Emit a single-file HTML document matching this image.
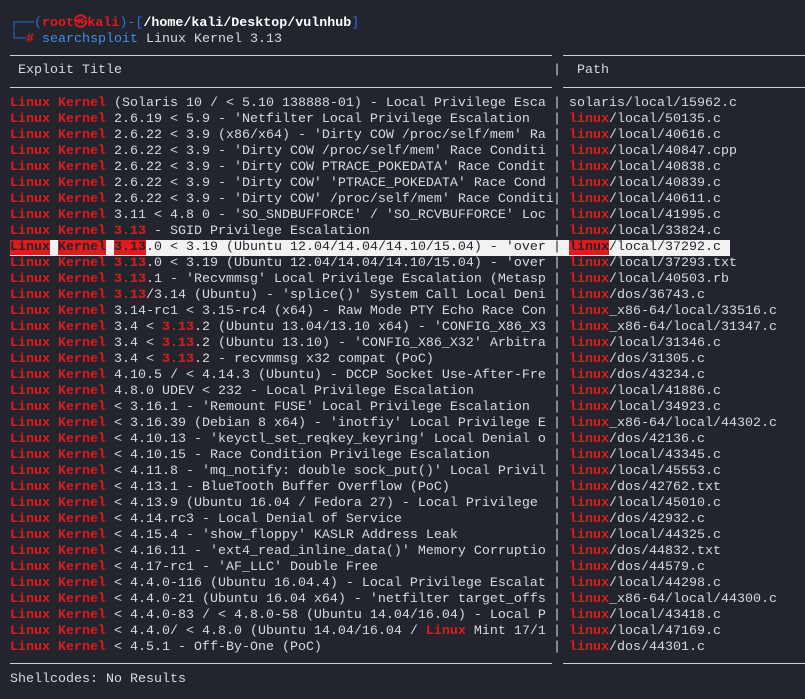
<!DOCTYPE html>
<html><head><meta charset="utf-8"><style>
body{margin:0;width:805px;height:699px;background:#23252e;overflow:hidden;font-family:"Liberation Mono","DejaVu Sans Mono",monospace;font-size:13.33px;color:#d9d9d9}
.l{position:absolute;left:10px;white-space:pre;line-height:16px}
.b{color:#2f6fe0}.r{color:#e01b1b;font-weight:bold}.w{color:#fff;font-weight:bold}.c{color:#3f8ee8}
.hr{position:absolute;height:1px;background:#d0d0d0}
#rows{position:absolute;left:10px;top:96px;line-height:16px}
#rows div,.hd{white-space:pre;height:16px}
.L{display:inline-block;width:543px;overflow:hidden;vertical-align:top}
.k{color:#e01b1b;font-weight:bold}
.hl{background:#f2f2f2;color:#23252e;width:720px}
.hl .k{background:#e01b1b;color:#23252e}
</style></head><body>
<div class="l" style="top:16px"><span class="b">┌──(</span><span class="r">root㉿kali</span><span class="b">)-[</span><span class="w">/home/kali/Desktop/vulnhub</span><span class="b">]</span></div>
<div class="l" style="top:32px"><span class="b">└─</span><span class="r">#</span> <span class="c">searchsploit</span> Linux Kernel 3.13</div>
<div class="hr" style="top:55px;left:10px;width:542px"></div><div class="hr" style="top:55px;left:563px;width:242px"></div>
<div class="l hd" style="top:63px"><span class="L"> Exploit Title</span>|  Path</div>
<div class="hr" style="top:87px;left:10px;width:542px"></div><div class="hr" style="top:87px;left:563px;width:242px"></div>
<div id="rows">
<div><span class="L"><span class="k">Linux Kernel</span> (Solaris 10 / &lt; 5.10 138888-01) - Local Privilege Esca</span>| solaris/local/15962.c</div>
<div><span class="L"><span class="k">Linux Kernel</span> 2.6.19 &lt; 5.9 - 'Netfilter Local Privilege Escalation</span>| <span class="k">linux</span>/local/50135.c</div>
<div><span class="L"><span class="k">Linux Kernel</span> 2.6.22 &lt; 3.9 (x86/x64) - 'Dirty COW /proc/self/mem' Ra</span>| <span class="k">linux</span>/local/40616.c</div>
<div><span class="L"><span class="k">Linux Kernel</span> 2.6.22 &lt; 3.9 - 'Dirty COW /proc/self/mem' Race Conditi</span>| <span class="k">linux</span>/local/40847.cpp</div>
<div><span class="L"><span class="k">Linux Kernel</span> 2.6.22 &lt; 3.9 - 'Dirty COW PTRACE_POKEDATA' Race Condit</span>| <span class="k">linux</span>/local/40838.c</div>
<div><span class="L"><span class="k">Linux Kernel</span> 2.6.22 &lt; 3.9 - 'Dirty COW' 'PTRACE_POKEDATA' Race Cond</span>| <span class="k">linux</span>/local/40839.c</div>
<div><span class="L"><span class="k">Linux Kernel</span> 2.6.22 &lt; 3.9 - 'Dirty COW' /proc/self/mem' Race Conditi</span>| <span class="k">linux</span>/local/40611.c</div>
<div><span class="L"><span class="k">Linux Kernel</span> 3.11 &lt; 4.8 0 - 'SO_SNDBUFFORCE' / 'SO_RCVBUFFORCE' Loc</span>| <span class="k">linux</span>/local/41995.c</div>
<div><span class="L"><span class="k">Linux Kernel</span> <span class="k">3.13</span> - SGID Privilege Escalation</span>| <span class="k">linux</span>/local/33824.c</div>
<div class="hl"><span class="L"><span class="k">Linux</span> <span class="k">Kernel</span> <span class="k">3.13</span>.0 &lt; 3.19 (Ubuntu 12.04/14.04/14.10/15.04) - 'over</span>| <span class="k">linux</span>/local/37292.c</div>
<div><span class="L"><span class="k">Linux Kernel</span> <span class="k">3.13</span>.0 &lt; 3.19 (Ubuntu 12.04/14.04/14.10/15.04) - 'over</span>| <span class="k">linux</span>/local/37293.txt</div>
<div><span class="L"><span class="k">Linux Kernel</span> <span class="k">3.13</span>.1 - 'Recvmmsg' Local Privilege Escalation (Metasp</span>| <span class="k">linux</span>/local/40503.rb</div>
<div><span class="L"><span class="k">Linux Kernel</span> <span class="k">3.13</span>/3.14 (Ubuntu) - 'splice()' System Call Local Deni</span>| <span class="k">linux</span>/dos/36743.c</div>
<div><span class="L"><span class="k">Linux Kernel</span> 3.14-rc1 &lt; 3.15-rc4 (x64) - Raw Mode PTY Echo Race Con</span>| <span class="k">linux</span>_x86-64/local/33516.c</div>
<div><span class="L"><span class="k">Linux Kernel</span> 3.4 &lt; <span class="k">3.13</span>.2 (Ubuntu 13.04/13.10 x64) - 'CONFIG_X86_X3</span>| <span class="k">linux</span>_x86-64/local/31347.c</div>
<div><span class="L"><span class="k">Linux Kernel</span> 3.4 &lt; <span class="k">3.13</span>.2 (Ubuntu 13.10) - 'CONFIG_X86_X32' Arbitra</span>| <span class="k">linux</span>/local/31346.c</div>
<div><span class="L"><span class="k">Linux Kernel</span> 3.4 &lt; <span class="k">3.13</span>.2 - recvmmsg x32 compat (PoC)</span>| <span class="k">linux</span>/dos/31305.c</div>
<div><span class="L"><span class="k">Linux Kernel</span> 4.10.5 / &lt; 4.14.3 (Ubuntu) - DCCP Socket Use-After-Fre</span>| <span class="k">linux</span>/dos/43234.c</div>
<div><span class="L"><span class="k">Linux Kernel</span> 4.8.0 UDEV &lt; 232 - Local Privilege Escalation</span>| <span class="k">linux</span>/local/41886.c</div>
<div><span class="L"><span class="k">Linux Kernel</span> &lt; 3.16.1 - 'Remount FUSE' Local Privilege Escalation</span>| <span class="k">linux</span>/local/34923.c</div>
<div><span class="L"><span class="k">Linux Kernel</span> &lt; 3.16.39 (Debian 8 x64) - 'inotfiy' Local Privilege E</span>| <span class="k">linux</span>_x86-64/local/44302.c</div>
<div><span class="L"><span class="k">Linux Kernel</span> &lt; 4.10.13 - 'keyctl_set_reqkey_keyring' Local Denial o</span>| <span class="k">linux</span>/dos/42136.c</div>
<div><span class="L"><span class="k">Linux Kernel</span> &lt; 4.10.15 - Race Condition Privilege Escalation</span>| <span class="k">linux</span>/local/43345.c</div>
<div><span class="L"><span class="k">Linux Kernel</span> &lt; 4.11.8 - 'mq_notify: double sock_put()' Local Privil</span>| <span class="k">linux</span>/local/45553.c</div>
<div><span class="L"><span class="k">Linux Kernel</span> &lt; 4.13.1 - BlueTooth Buffer Overflow (PoC)</span>| <span class="k">linux</span>/dos/42762.txt</div>
<div><span class="L"><span class="k">Linux Kernel</span> &lt; 4.13.9 (Ubuntu 16.04 / Fedora 27) - Local Privilege</span>| <span class="k">linux</span>/local/45010.c</div>
<div><span class="L"><span class="k">Linux Kernel</span> &lt; 4.14.rc3 - Local Denial of Service</span>| <span class="k">linux</span>/dos/42932.c</div>
<div><span class="L"><span class="k">Linux Kernel</span> &lt; 4.15.4 - 'show_floppy' KASLR Address Leak</span>| <span class="k">linux</span>/local/44325.c</div>
<div><span class="L"><span class="k">Linux Kernel</span> &lt; 4.16.11 - 'ext4_read_inline_data()' Memory Corruptio</span>| <span class="k">linux</span>/dos/44832.txt</div>
<div><span class="L"><span class="k">Linux Kernel</span> &lt; 4.17-rc1 - 'AF_LLC' Double Free</span>| <span class="k">linux</span>/dos/44579.c</div>
<div><span class="L"><span class="k">Linux Kernel</span> &lt; 4.4.0-116 (Ubuntu 16.04.4) - Local Privilege Escalat</span>| <span class="k">linux</span>/local/44298.c</div>
<div><span class="L"><span class="k">Linux Kernel</span> &lt; 4.4.0-21 (Ubuntu 16.04 x64) - 'netfilter target_offs</span>| <span class="k">linux</span>_x86-64/local/44300.c</div>
<div><span class="L"><span class="k">Linux Kernel</span> &lt; 4.4.0-83 / &lt; 4.8.0-58 (Ubuntu 14.04/16.04) - Local P</span>| <span class="k">linux</span>/local/43418.c</div>
<div><span class="L"><span class="k">Linux Kernel</span> &lt; 4.4.0/ &lt; 4.8.0 (Ubuntu 14.04/16.04 / <span class="k">Linux</span> Mint 17/1</span>| <span class="k">linux</span>/local/47169.c</div>
<div><span class="L"><span class="k">Linux Kernel</span> &lt; 4.5.1 - Off-By-One (PoC)</span>| <span class="k">linux</span>/dos/44301.c</div>
</div>
<div class="hr" style="top:663px;left:10px;width:542px"></div><div class="hr" style="top:663px;left:563px;width:242px"></div>
<div class="l" style="top:672px">Shellcodes: No Results</div>
</body></html>
